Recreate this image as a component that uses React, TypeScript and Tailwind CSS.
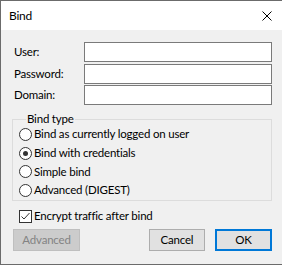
import React, { useState } from 'react';

const font = { fontFamily: 'Lato, "Noto Sans", sans-serif' };

const Radio: React.FC<{ label: string; checked: boolean; onSelect: () => void }> = ({ label, checked, onSelect }) => (
  <label className="flex items-center h-[18.7px] cursor-default" onClick={onSelect}>
    <span className="w-[13px] h-[13px] rounded-full border border-[#333333] bg-white flex items-center justify-center shrink-0">
      {checked && <span className="w-[5px] h-[5px] rounded-full bg-[#333333]" />}
    </span>
    <span className="ml-[2px] text-black whitespace-nowrap">{label}</span>
  </label>
);

const Field: React.FC<{ label: string; className?: string; type?: string }> = ({ label, className = '', type = 'text' }) => (
  <div className={`flex items-center h-[20px] ${className}`}>
    <span className="w-[70px] text-black">{label}</span>
    <input
      type={type}
      className="w-[188px] h-[20px] border border-[#7a7a7a] bg-white outline-none px-[2px] text-[12px]"
    />
  </div>
);

export default function App() {
  const [bindType, setBindType] = useState('credentials');
  const [encrypt, setEncrypt] = useState(true);

  const options = [
    { id: 'current', label: 'Bind as currently logged on user' },
    { id: 'credentials', label: 'Bind with credentials' },
    { id: 'simple', label: 'Simple bind' },
    { id: 'digest', label: 'Advanced (DIGEST)' },
  ];

  return (
    <div
      className="w-[282px] h-[265px] flex flex-col bg-[#f0f0f0] border-l border-t border-b border-[#6b6b6b] text-[11.5px] tracking-[-0.2px] leading-[16px] overflow-hidden"
      style={font}
    >
      {/* title bar */}
      <div className="h-[29px] bg-white flex items-center justify-between pl-[8px] pr-[9px] shrink-0">
        <span className="text-black text-[12px]">Bind</span>
        <svg width="10" height="10" viewBox="0 0 10 10" className="mr-[1px]">
          <path d="M0.5 0.5 L9.5 9.5 M9.5 0.5 L0.5 9.5" stroke="#000" strokeWidth="1" fill="none" />
        </svg>
      </div>

      {/* body */}
      <div className="flex flex-col pl-[11px] pr-[9px] pt-[12px]">
        <div className="pl-[2px]">
          <Field label="User:" />
          <Field label="Password:" type="password" className="mt-[2px]" />
          <Field label="Domain:" className="mt-[1px]" />
        </div>

        <fieldset className="mt-[6px] border border-[#dcdcdc] pl-[6px] pb-0 w-[260px]">
          <legend className="ml-[7px] px-[1px] text-black leading-[16px]">Bind type</legend>
          <div className="flex flex-col -mt-[2px]">
            {options.map((o) => (
              <Radio key={o.id} label={o.label} checked={bindType === o.id} onSelect={() => setBindType(o.id)} />
            ))}
          </div>
        </fieldset>

        <label className="flex items-center mt-[9px] pl-[7px] h-[13px]" onClick={() => setEncrypt(!encrypt)}>
          <span className="w-[13px] h-[13px] border border-[#333333] bg-white flex items-center justify-center shrink-0">
            {encrypt && (
              <svg width="11" height="11" viewBox="0 0 11 11">
                <path d="M1.5 5.5 L4 8 L9.5 2" stroke="#333" strokeWidth="1" fill="none" />
              </svg>
            )}
          </span>
          <span className="ml-[2px] text-black whitespace-nowrap">Encrypt traffic after bind</span>
        </label>

        <div className="flex items-center mt-[6px] pl-[1px]">
          <button
            disabled
            className="w-[67px] h-[22px] bg-[#cccccc] border border-[#bfbfbf] text-[#838383] text-[11.5px]"
          >
            Advanced
          </button>
          <button className="ml-[69px] w-[56px] h-[22px] bg-[#e1e1e1] border border-[#adadad] text-black text-[11.5px]">
            Cancel
          </button>
          <button className="ml-[10px] w-[57px] h-[22px] bg-[#e1e1e1] border-2 border-[#0078d7] text-black text-[11.5px]">
            OK
          </button>
        </div>
      </div>
    </div>
  );
}
